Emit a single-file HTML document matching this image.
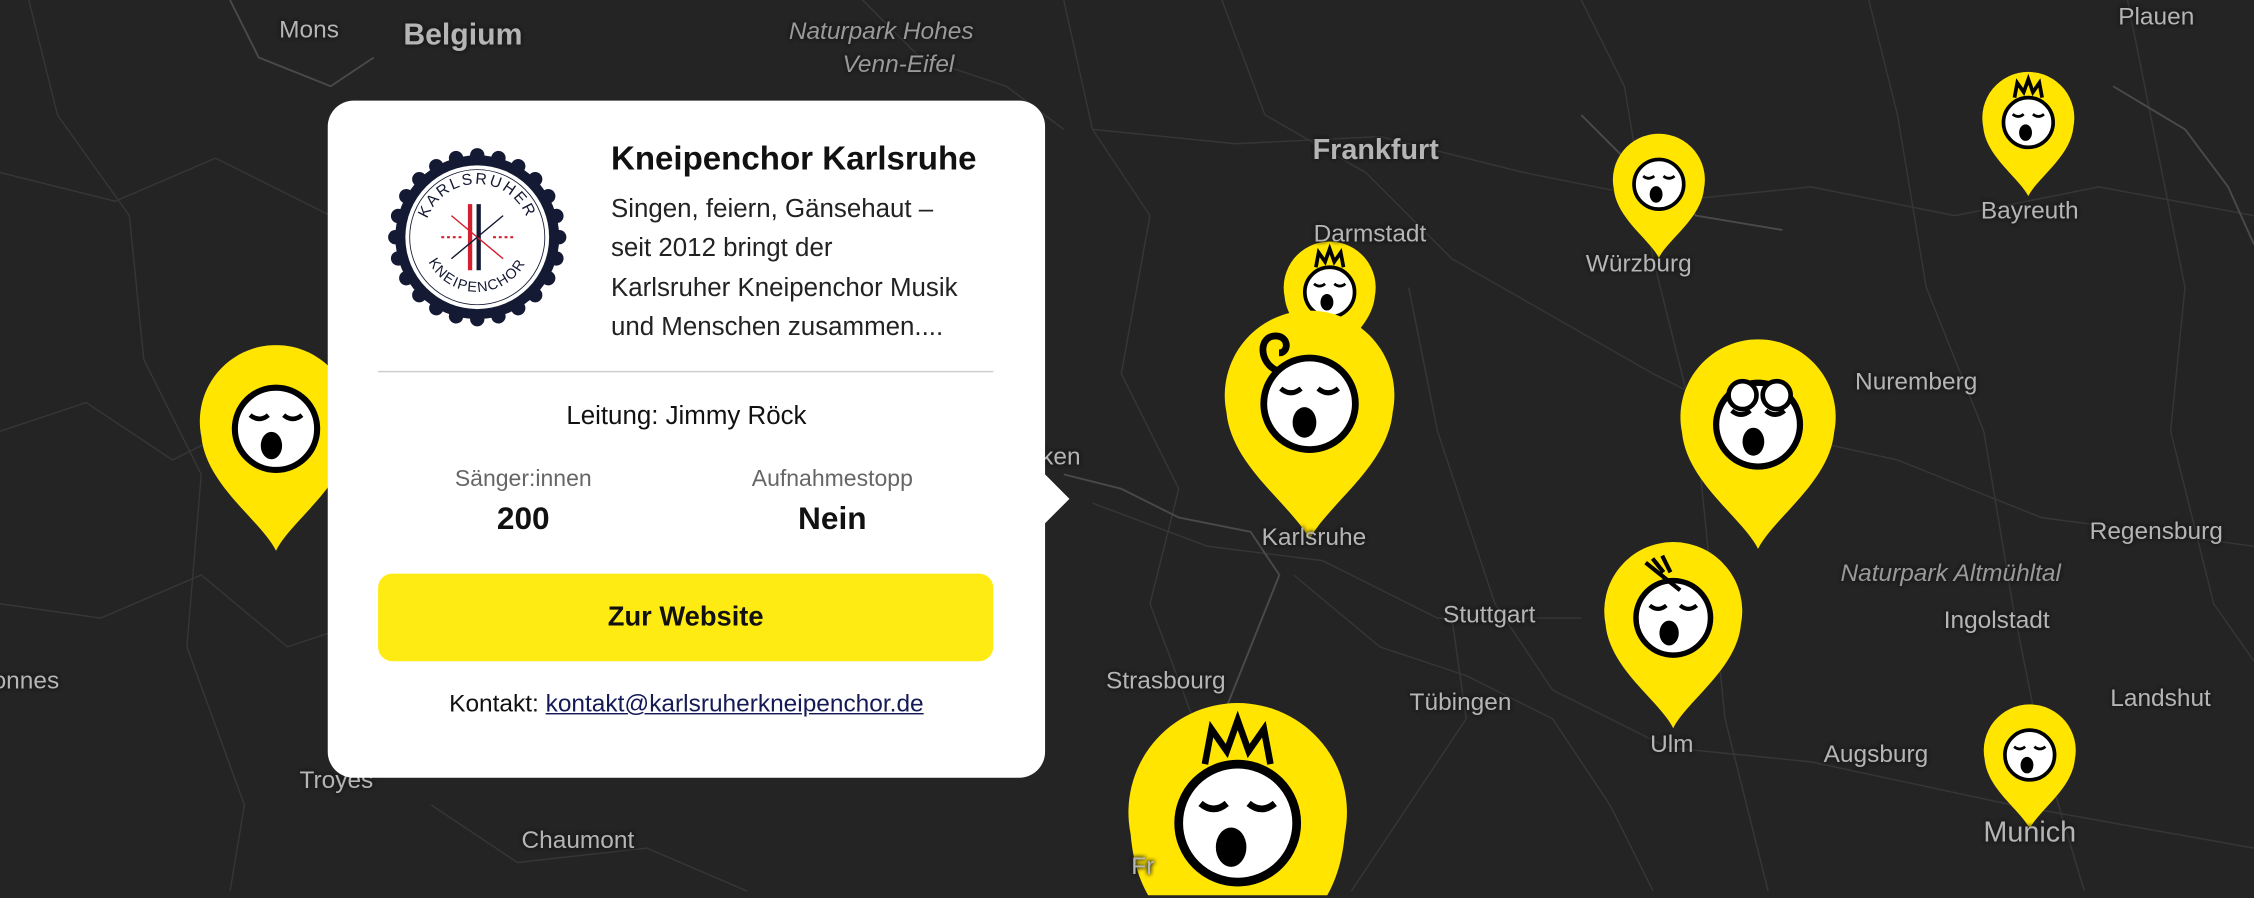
<!DOCTYPE html>
<html><head><meta charset="utf-8">
<style>
html,body{margin:0;padding:0;width:2254px;height:898px;overflow:hidden;background:#242424;}
#w{position:absolute;left:0;top:0;width:1568px;height:624px;overflow:hidden;transform:scale(1.4375);transform-origin:0 0;font-family:"Liberation Sans",sans-serif;}
.lbl{position:absolute;color:#b5b5b5;font-size:17px;transform:translate(-50%,-50%);white-space:nowrap;text-shadow:0 0 3px #1a1a1a,0 0 3px #1a1a1a;}
.it{font-style:italic;color:#999;}
.pop{position:absolute;left:228px;top:70px;width:499px;height:471px;background:#fff;border-radius:18px;color:#111;}
.pop:after{content:"";position:absolute;right:-12px;top:265px;width:24px;height:24px;background:#fff;transform:rotate(45deg);}
.t{position:absolute;white-space:nowrap;}
</style></head><body><div id="w">
<svg width="1568" height="624" style="position:absolute;left:0;top:0">
<g fill="none" stroke="#363636" stroke-width="1">
<path d="M0 120 L80 140 L150 110 L230 150 L300 130 L380 170"/>
<path d="M0 300 L60 280 L120 320 L160 300"/>
<path d="M0 420 L70 430 L140 400 L200 450 L260 430"/>
<path d="M20 0 L40 80 L90 150 L100 250 L140 330 L130 450 L170 560 L160 620"/>
<path d="M300 560 L360 600 L450 590 L520 620"/>
<path d="M740 0 L760 90 L800 150 L780 260 L820 340 L800 420 L830 500"/>
<path d="M760 90 L860 100 L960 95 L1060 120 L1160 140 L1260 130 L1360 150 L1460 130 L1568 150"/>
<path d="M850 0 L880 80 L950 120 L1010 180 L1080 220 L1150 260 L1230 300 L1320 320 L1420 360 L1568 380"/>
<path d="M980 200 L1000 300 L1040 420 L1080 480 L1160 520 L1260 530 L1400 560 L1568 590"/>
<path d="M1100 0 L1130 60 L1150 180 L1180 300 L1190 400 L1200 500 L1230 620"/>
<path d="M1300 0 L1320 80 L1340 200 L1380 300 L1400 420 L1420 520 L1450 620"/>
<path d="M900 400 L960 450 L1020 470 L1080 500 L1120 560 L1150 620"/>
<path d="M1480 0 L1500 100 L1520 200 L1510 300 L1540 420 L1568 460"/>
<path d="M760 350 L840 380 L920 390 L1000 430 L1100 430"/>
<path d="M940 620 L980 560 L1020 500 L1010 430"/>
<path d="M600 0 L640 40 L700 60 L740 90"/>
</g>
<g fill="none" stroke="#4a4a4a" stroke-width="1.3">
<path d="M160 0 L180 40 L230 60 L260 40"/>
<path d="M740 330 L780 340 L820 360 L870 370 L890 400 L870 450 L850 500 L830 560 L822 620"/>
<path d="M1470 60 L1520 90 L1550 130 L1568 170"/>
<path d="M1100 80 L1140 120 L1180 150 L1240 160"/>
</g>
<defs>
<path id="pin" d="M50 135 C40 115 4 92 1 60 A50 50 0 1 1 99 60 C96 92 60 115 50 135Z" fill="#ffe500"/>
<g id="face">
<circle cx="50" cy="55" r="27" fill="#fff" stroke="#000" stroke-width="4"/>
<path d="M33 46 q6 5 12 0 M55 46 q6 5 12 0" fill="none" stroke="#000" stroke-width="3"/>
<ellipse cx="47" cy="66" rx="7" ry="9" fill="#000"/>
</g>
</defs>
<g transform="translate(139,240) scale(1.06)"><use href="#pin"/><use href="#face"/></g>
<g transform="translate(893,168) scale(0.64)"><use href="#pin"/><use href="#face"/><path d="M35 28 L38 12 L45 22 L50 8 L55 22 L62 12 L65 28" fill="none" stroke="#000" stroke-width="4"/></g>
<g transform="translate(852,216) scale(1.18)"><use href="#pin"/><use href="#face"/><path d="M30 35 c-10 -5 -10 -20 0 -20 c8 0 8 10 2 10" fill="none" stroke="#000" stroke-width="4"/></g>
<g transform="translate(1122,93) scale(0.64)"><use href="#pin"/><use href="#face"/></g>
<g transform="translate(1379,50) scale(0.64)"><use href="#pin"/><use href="#face"/><path d="M35 28 L38 12 L45 22 L50 8 L55 22 L62 12 L65 28" fill="none" stroke="#000" stroke-width="4"/></g>
<g transform="translate(1169,236) scale(1.08)"><use href="#pin"/><use href="#face"/><circle cx="40" cy="36" r="9" fill="#fff" stroke="#000" stroke-width="3"/><circle cx="62" cy="36" r="9" fill="#fff" stroke="#000" stroke-width="3"/></g>
<g transform="translate(1116,377) scale(0.96)"><use href="#pin"/><use href="#face"/><path d="M30 15 L55 35 M35 12 l8 10 M42 10 l6 12" fill="none" stroke="#000" stroke-width="3"/></g>
<g transform="translate(1380,490) scale(0.64)"><use href="#pin"/><use href="#face"/></g>
<g transform="translate(785,489) scale(1.52)"><path d="M1 60 A50 50 0 1 1 99 60 C98 72 95 81 91 88 L9 88 C5 81 2 72 1 60Z" fill="#ffe500"/><use href="#face"/><path d="M35 28 L38 12 L45 22 L50 8 L55 22 L62 12 L65 28" fill="none" stroke="#000" stroke-width="3"/></g>
</svg>
<div class="lbl" style="left:215px;top:21px">Mons</div>
<div class="lbl" style="left:322px;top:25px;font-size:21px;font-weight:bold">Belgium</div>
<div class="lbl it" style="left:613px;top:22px">Naturpark Hohes</div>
<div class="lbl it" style="left:625px;top:45px">Venn-Eifel</div>
<div class="lbl" style="left:957px;top:105px;font-size:20px;font-weight:bold">Frankfurt</div>
<div class="lbl" style="left:953px;top:163px">Darmstadt</div>
<div class="lbl" style="left:1140px;top:184px">Würzburg</div>
<div class="lbl" style="left:1412px;top:147px">Bayreuth</div>
<div class="lbl" style="left:1500px;top:12px">Plauen</div>
<div class="lbl" style="left:1333px;top:266px">Nuremberg</div>
<div class="lbl" style="left:914px;top:374px">Karlsruhe</div>
<div class="lbl" style="left:1036px;top:428px">Stuttgart</div>
<div class="lbl" style="left:1500px;top:370px">Regensburg</div>
<div class="lbl it" style="left:1357px;top:399px">Naturpark Altmühltal</div>
<div class="lbl" style="left:1389px;top:432px">Ingolstadt</div>
<div class="lbl" style="left:811px;top:474px">Strasbourg</div>
<div class="lbl" style="left:1016px;top:489px">Tübingen</div>
<div class="lbl" style="left:1163px;top:518px">Ulm</div>
<div class="lbl" style="left:1305px;top:525px">Augsburg</div>
<div class="lbl" style="left:1503px;top:486px">Landshut</div>
<div class="lbl" style="left:1412px;top:580px;font-size:20px">Munich</div>
<div class="lbl" style="left:234px;top:543px">Troyes</div>
<div class="lbl" style="left:402px;top:585px">Chaumont</div>
<div class="lbl" style="left:18px;top:474px">onnes</div>
<div class="lbl" style="left:738px;top:318px">ken</div>
<div class="lbl" style="left:795px;top:603px">Fr</div>

<div class="pop">
<svg style="position:absolute;left:41px;top:32px" width="126" height="126" viewBox="0 0 126 126">
<defs>
<path id="tt" d="M26 63 A37 37 0 0 1 100 63"/>
<path id="tb" d="M22 63 A41 41 0 0 0 104 63"/>
<g id="sc" fill="#141a33"><circle cx="63" cy="6" r="5"/><circle cx="63" cy="120" r="5"/><circle cx="6" cy="63" r="5"/><circle cx="120" cy="63" r="5"/></g>
</defs>
<circle cx="63" cy="63" r="57" fill="#141a33"/>
<use href="#sc"/><use href="#sc" transform="rotate(15 63 63)"/><use href="#sc" transform="rotate(30 63 63)"/><use href="#sc" transform="rotate(45 63 63)"/><use href="#sc" transform="rotate(60 63 63)"/><use href="#sc" transform="rotate(75 63 63)"/>
<circle cx="63" cy="63" r="50" fill="#fff"/>
<circle cx="63" cy="63" r="47" fill="none" stroke="#141a33" stroke-width="0.6"/>
<path d="M58 40 V86" stroke="#d32030" stroke-width="3"/><path d="M64 40 V86" stroke="#141a33" stroke-width="3"/>
<path d="M45 48 L81 78" stroke="#d32030" stroke-width="1"/><path d="M45 78 L81 48" stroke="#141a33" stroke-width="1"/>
<path d="M38 63 H52 M74 63 H88" stroke="#d32030" stroke-width="1.5" stroke-dasharray="2 2"/>
<text font-size="11" fill="#141a33" font-family="Liberation Sans" letter-spacing="1.5"><textPath href="#tt" startOffset="50%" text-anchor="middle">KARLSRUHER</textPath></text>
<text font-size="10" fill="#141a33" font-family="Liberation Sans" letter-spacing="1.5" dy="-3"><textPath href="#tb" startOffset="50%" text-anchor="middle">KNEIPENCHOR</textPath></text>
</svg>
<div class="t" style="left:197px;top:27px;font-size:23px;font-weight:bold">Kneipenchor Karlsruhe</div>
<div class="t" style="left:197px;top:62px;font-size:18px;line-height:27.3px;color:#222">Singen, feiern, Gänsehaut –<br>seit 2012 bringt der<br>Karlsruher Kneipenchor Musik<br>und Menschen zusammen....</div>
<div style="position:absolute;left:35px;top:188px;width:428px;height:1px;background:#ccc"></div>
<div class="t" style="left:0;width:499px;text-align:center;top:209px;font-size:18px">Leitung: Jimmy Röck</div>
<div class="t" style="left:86px;width:100px;text-align:center;top:255px;font-size:16px;color:#666">Sänger:innen</div>
<div class="t" style="left:286px;width:130px;text-align:center;top:255px;font-size:16px;color:#666">Aufnahmestopp</div>
<div class="t" style="left:86px;width:100px;text-align:center;top:278px;font-size:22px;font-weight:bold">200</div>
<div class="t" style="left:286px;width:130px;text-align:center;top:278px;font-size:22px;font-weight:bold">Nein</div>
<div style="position:absolute;left:35px;top:329px;width:428px;height:61px;background:#ffeb14;border-radius:10px;text-align:center;line-height:61px;font-size:19px;font-weight:bold">Zur Website</div>
<div class="t" style="left:0;width:499px;text-align:center;top:410px;font-size:17px">Kontakt: <span style="color:#141a55;text-decoration:underline">kontakt@karlsruherkneipenchor.de</span></div>
</div>
</div></body></html>
